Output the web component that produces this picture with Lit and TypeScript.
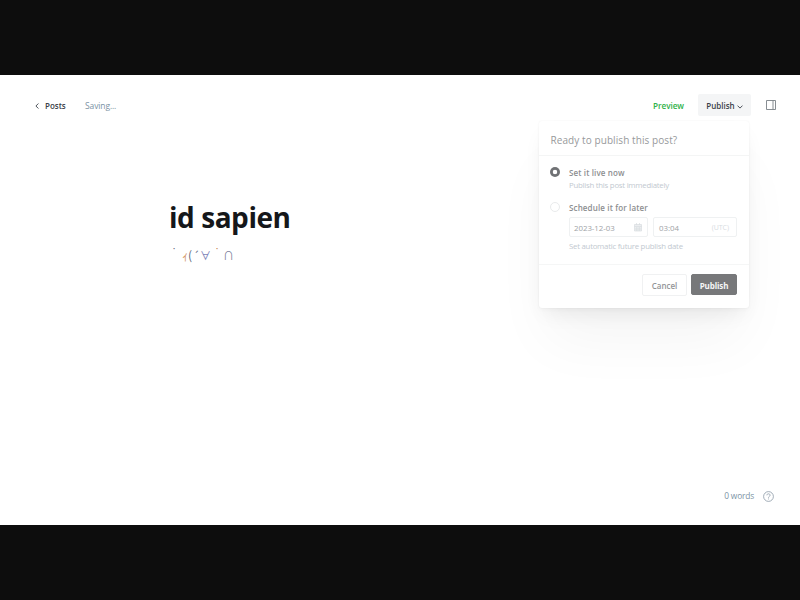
import { LitElement, html, css } from "lit";
import { customElement } from "lit/decorators.js";

@customElement("publish-menu")
class PublishMenu extends LitElement {
  static styles = css`
    :host { display: flex; flex-direction: column; box-sizing: border-box; width: 210px; height: 187px;
      background: #fff; border-radius: 3px; color: #8f9194; white-space: nowrap;
      box-shadow: 0 0 2px rgba(0,0,0,.06), 0 2px 5px rgba(0,0,0,.025), 0 10px 20px -6px rgba(0,0,0,.08), 0 40px 60px -8px rgba(0,0,0,.045); }
    * { box-sizing: border-box; }
    header { height: 35px; padding: 10px 11.5px 0; border-bottom: 1px solid #f4f5f5; font-size: 10px; line-height: 18px; letter-spacing: .08px; color: #97999b; }
    .body { height: 109px; padding: 11px 12px 0 11px; border-bottom: 1px solid #f5f6f6; }
    .option { display: grid; grid-template-columns: 19px 1fr; }
    .option + .option { margin-top: 12px; }
    .dot { width: 10px; height: 10px; border: 1px solid #e9ebec; border-radius: 50%; }
    .dot.on { border: 0; background: radial-gradient(circle, #fff 1.9px, #707275 2.6px); }
    .name { font-weight: 600; font-size: 8px; line-height: 12px; color: #8c8e90; letter-spacing: .14px; }
    .hint { font-size: 7.8px; line-height: 12px; color: #c2c9d0; letter-spacing: -.24px; }
    .option:first-child .hint { margin-bottom: -1px; }
    .fields { display: flex; gap: 5px; margin-top: 3px; }
    .field { display: flex; align-items: center; justify-content: space-between; height: 20px; border: 1px solid #eff1f2; border-radius: 2px; padding: 1px 5px 0 4px; font-size: 7.9px; letter-spacing: -.05px; color: #a0a3a6; }
    .date { width: 79px; }
    .time { width: 84px; padding-left: 5px; }
    .zone { color: #d8dcdf; font-size: 7px; padding: 0 2px 1px 0; }
    .fields + .hint { margin-top: 3px; }
    footer { display: flex; justify-content: flex-end; gap: 4px; padding: 9px 12px 0; }
    button { font: 600 8px/21px "Open Sans", "Noto Sans", sans-serif; height: 22px; border-radius: 2px; padding: 0; border: 1px solid #f0f1f2; background: #fff; color: #929497; width: 45px; }
    button.go { background: #77787a; border-color: #77787a; color: #f6f6f6; font-weight: 700; width: 46px; height: 21px; letter-spacing: -.12px; }
  `;
  render() {
    return html`
      <header>Ready to publish this post?</header>
      <div class="body">
        <div class="option">
          <span class="dot on"></span>
          <div><div class="name">Set it live now</div><div class="hint">Publish this post immediately</div></div>
        </div>
        <div class="option">
          <span class="dot"></span>
          <div>
            <div class="name">Schedule it for later</div>
            <div class="fields">
              <div class="field date"><span>2023-12-03</span>
                <svg width="8" height="9" viewBox="0 0 8 9" fill="#eceef0" stroke="#d9dcdf" stroke-width=".7"><path d="M.5 1.5h7v6.5h-7zM.5 3.5h7M2.5 0v2M5.5 0v2M2.7 4v4M5.3 4v4M1 6h6"/></svg>
              </div>
              <div class="field time"><span>03:04</span><span class="zone">(UTC)</span></div>
            </div>
            <div class="hint">Set automatic future publish date</div>
          </div>
        </div>
      </div>
      <footer><button>Cancel</button><button class="go">Publish</button></footer>`;
  }
}

@customElement("app-root")
class AppRoot extends LitElement {
  static styles = css`
    :host { display: flex; flex-direction: column; width: 800px; height: 600px; box-sizing: border-box; padding: 75px 0; overflow: hidden;
      background: #0d0d0d; color: #15171a; font-family: "Open Sans", "Noto Sans", sans-serif; }
    * { box-sizing: border-box; }
    main { position: relative; flex: 1; display: flex; flex-direction: column; background: #fff; }
    nav { display: flex; align-items: center; height: 22px; margin: 19px 24px 0 35px; font-size: 8px; line-height: 22px; white-space: nowrap; }
    .back { display: flex; align-items: center; gap: 6px; width: 50px; padding-top: 1px; color: #394047; font-weight: 600; }
    .status { color: #7c93a5; flex: 1; padding-top: 1px; font-size: 8.5px; letter-spacing: -.12px; }
    .preview { color: #30b24a; font-weight: 550; padding-top: 1px; margin-right: 14px; font-size: 8.2px; letter-spacing: -.05px; }
    .trigger { display: flex; align-items: center; justify-content: center; gap: 2px; width: 53px; height: 22px; padding-top: 1px; margin-right: 15px; border-radius: 2px; background: #f4f5f6; color: #394047; font-weight: 600; }
    .trigger svg { margin-top: 3px; }
    article { flex: 1; padding: 79px 0 0 169px; }
    h1 { margin: 0; font-size: 28px; line-height: 44px; font-weight: 700; letter-spacing: -.45px; }
    .face { display: flex; margin: 5px 0 0; height: 22px; line-height: 22px; font-family: "Noto Sans CJK JP", "DejaVu Sans", sans-serif; font-weight: 400; font-size: 11px; color: #626a7c; white-space: pre; }
    .face span { display: block; }
    .face .high { font-family: "Open Sans", sans-serif; font-size: 12px; line-height: 18px; }
    .c1 { width: 13px; padding-left: 4px; } .c2 { width: 6px; color: #d49a6c; font-size: 13px; } .c3 { width: 5px; font-size: 12px; } .c4 { width: 7px; }
    .c5 { width: 14px; color: #7c83b8; } .c6 { width: 9px; padding-left: 2px; color: #c4804c; } .c7 { width: 12px; color: #7c7f9c; }
    .count { display: flex; align-items: center; justify-content: flex-end; gap: 9px; height: 12px; margin: 0 26px 23px 0; color: #7c93a5; font-size: 8.4px; letter-spacing: -.18px; line-height: 12px; }
    publish-menu { position: absolute; left: 539px; top: 46px; }
  `;
  render() {
    return html`<main>
      <nav>
        <span class="back"><svg width="4" height="6" viewBox="0 0 4 6" fill="none" stroke="#394047" stroke-width=".9"><path d="M3.4.5.9 3l2.5 2.5"/></svg>Posts</span>
        <span class="status">Saving...</span>
        <span class="preview">Preview</span>
        <span class="trigger">Publish<svg width="6" height="4" viewBox="0 0 6 4" fill="none" stroke="#394047" stroke-width=".9"><path d="M.5.6 3 3.1 5.5.6"/></svg></span>
        <svg width="10" height="10" viewBox="0 0 10 10" fill="none" stroke="#7b8187" stroke-width=".9"><path d="M.5.5h9v9h-9zM7 .5v9"/></svg>
      </nav>
      <article>
        <h1>id sapien</h1>
        <p class="face"><span class="c1 high">˙</span><span class="c2">ｨ</span><span class="c3">(</span><span class="c4">´</span><span class="c5">∀</span><span class="c6 high">˙</span><span class="c7">∩</span></p>
      </article>
      <div class="count"><span>0 words</span>
        <svg width="11" height="11" viewBox="0 0 11 11" fill="none" stroke="#8a98a6" stroke-width=".8"><circle cx="5.5" cy="5.5" r="4.9"/><path d="M3.9 4.3c0-2 3.2-2 3.2 0 0 1.1-1.6 1-1.6 2.4M5.5 7.5v.9"/></svg>
      </div>
      <publish-menu></publish-menu>
    </main>`;
  }
}
